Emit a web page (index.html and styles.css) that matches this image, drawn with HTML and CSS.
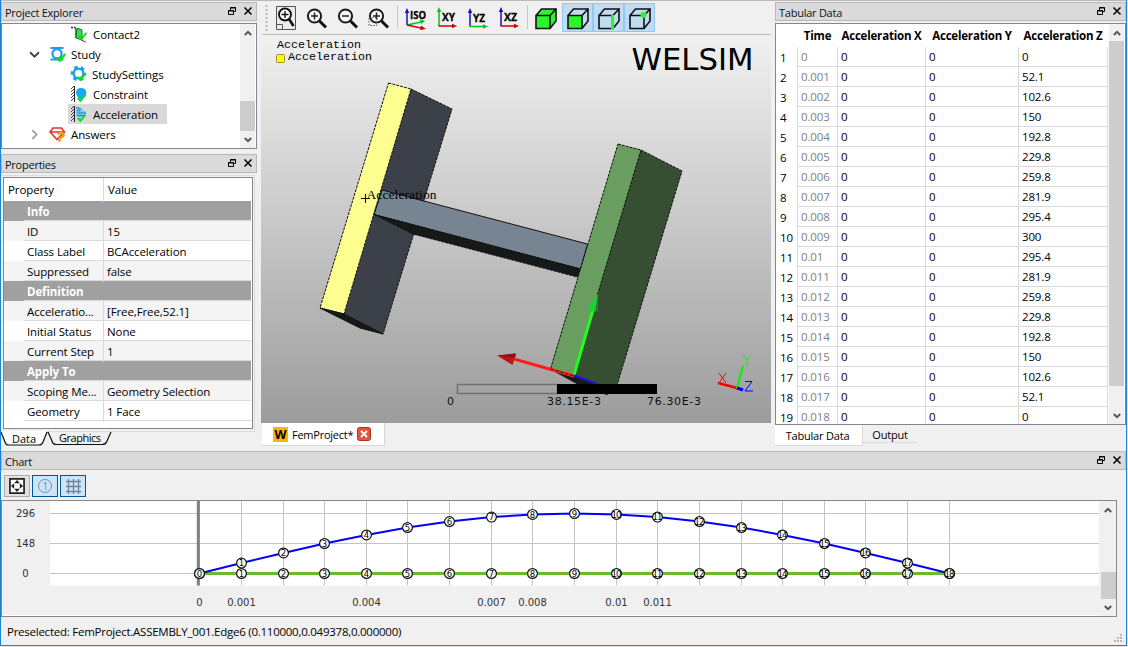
FILE: index.html
```html
<!DOCTYPE html>
<html lang="en">
<head>
<meta charset="utf-8">
<title>WELSIM</title>
<link rel="stylesheet" href="styles.css">
</head>
<body>
<svg class="defs" width="0" height="0">
  <defs>
    <symbol id="restore" viewBox="0 0 8 8"><path d="M2.5 3V.5h5v4H6M2 1h6" fill="none" stroke="#000"/><path d="M.5 3.5h5v4h-5zM0 4h6" fill="none" stroke="#000"/></symbol>
    <symbol id="close" viewBox="0 0 8 8"><path d="M.5.5l7 7M7.500.5l-7 7" stroke="#000" stroke-width="1.500"/></symbol>
    <symbol id="up" viewBox="0 0 8 6"><path d="M.8 5L4 1.800 7.200 5" fill="none" stroke="#555" stroke-width="1.900"/></symbol>
    <symbol id="down" viewBox="0 0 8 6"><path d="M.8 1L4 4.200 7.200 1" fill="none" stroke="#555" stroke-width="1.900"/></symbol>
    <symbol id="lens" viewBox="0 0 22 22"><circle cx="8.500" cy="8" r="6.600" fill="#f8f8f8" stroke="#1c1c1c" stroke-width="2"/><path d="M13.500 13l6.500 6.500" stroke="#111" stroke-width="3"/></symbol>
    <symbol id="check" viewBox="0 0 9 8"><path d="M.8 4l2.600 3L8.300.8" fill="none" stroke="#10e010" stroke-width="2"/></symbol>
    <symbol id="wall" viewBox="0 0 5 18"><path d="M4.500 1v16" stroke="#222"/><path d="M1 4l3-3M1 7l3-3M1 10l3-3M1 13l3-3M1 16l3-3" stroke="#333" stroke-width=".9"/></symbol>
  </defs>
</svg>
<div class="window">
  <div class="workspace">
    <aside class="left">
      <header class="dock-title"><span>Project Explorer</span><svg width="8" height="8"><use href="#restore"/></svg><svg width="8" height="8"><use href="#close"/></svg></header>
      <div class="tree">
        <ul class="tree-list">
          <li class="lvl2"><svg class="ic" viewBox="0 0 18 18"><path d="M1 2.500h4v2" fill="none" stroke="#222" stroke-width="1.300" stroke-dasharray="2 1"/><path d="M5 3l3 1v10l-3-1.500z" fill="#1c9c2a"/><path d="M7 3l5 2v10l-6-2z" fill="#35e048" stroke="#187a28"/><path d="M11 15l5 2" stroke="#444"/><use href="#check" x="8" y="7" width="9" height="8"/></svg><span>Contact2</span></li>
          <li class="lvl1"><svg class="chev" viewBox="0 0 10 10"><path d="M1 3l4 4 4-4" fill="none" stroke="#444" stroke-width="1.800"/></svg><svg class="ic" viewBox="0 0 18 18"><path d="M1.500 3h13M1.500 14.500h13" stroke="#189df0" stroke-width="2"/><circle cx="8" cy="8.700" r="4.600" fill="#fff" stroke="#189df0" stroke-width="2.200"/><use href="#check" x="7" y="8" width="10" height="9"/></svg><span>Study</span></li>
          <li class="lvl2 wide"><svg class="ic" viewBox="0 0 18 18"><circle cx="8.500" cy="8.500" r="6.300" fill="none" stroke="#189df0" stroke-width="3" stroke-dasharray="3.300 3.300" stroke-dashoffset="1.650"/><circle cx="8.500" cy="8.500" r="4.900" fill="#fff" stroke="#189df0" stroke-width="2.400"/><use href="#check" x="7" y="8" width="9" height="8"/></svg><span>StudySettings</span></li>
          <li class="lvl2"><svg class="ic" viewBox="0 0 18 18"><use href="#wall" width="5" height="18"/><path d="M6 8q0-5 5-5t5.500 5q-1 4-5 7-5-3-5.500-7z" fill="#16a8f5"/><use href="#check" x="7" y="9" width="9" height="8"/></svg><span>Constraint</span></li>
          <li class="lvl2 selected"><svg class="ic" viewBox="0 0 18 18"><use href="#wall" width="5" height="18"/><path d="M6 3q4-2 6 1t4 2v4l-5 5-5-4z" fill="#7cc8ee"/><path d="M6 3q5-1 4 2t-3 0M7 8h9M7 10.500h9" fill="none" stroke="#1583c5"/><use href="#check" x="7" y="9" width="9" height="8"/></svg><span>Acceleration</span></li>
          <li class="lvl1"><svg class="chev" viewBox="0 0 10 10"><path d="M3 1l4 4-4 4" fill="none" stroke="#999" stroke-width="1.500"/></svg><svg class="ic" viewBox="0 0 18 18"><path d="M4 3h8.500l3 4-7.500 7.500L1 7z M1 7h14.500" fill="#fff5f5" stroke="#d33a3a" stroke-width="1.600"/><path d="M9 9.500q3-3 5-1t-2 4l-1 1" fill="none" stroke="#f79a10" stroke-width="2.500"/><circle cx="10.500" cy="15.500" r="1.400" fill="#f79a10"/></svg><span>Answers</span></li>
        </ul>
        <div class="scroll tree-scroll"><svg width="8" height="6"><use href="#up"/></svg><i></i><svg width="8" height="6"><use href="#down"/></svg></div>
      </div>
      <header class="dock-title props-title"><span>Properties</span><svg width="8" height="8"><use href="#restore"/></svg><svg width="8" height="8"><use href="#close"/></svg></header>
      <div class="props-frame">
        <div class="props">
          <div class="prow head"><b>Property</b><span>Value</span></div>
          <div class="group">Info</div>
          <div class="prow odd"><b>ID</b><span>15</span></div>
          <div class="prow"><b>Class Label</b><span>BCAcceleration</span></div>
          <div class="prow odd"><b>Suppressed</b><span>false</span></div>
          <div class="group">Definition</div>
          <div class="prow odd"><b>Acceleratio...</b><span>[Free,Free,52.1]</span></div>
          <div class="prow"><b>Initial Status</b><span>None</span></div>
          <div class="prow odd"><b>Current Step</b><span>1</span></div>
          <div class="group">Apply To</div>
          <div class="prow odd"><b>Scoping Me...</b><span>Geometry Selection</span></div>
          <div class="prow"><b>Geometry</b><span>1 Face</span></div>
        </div>
      </div>
      <svg class="bottom-tabs" width="120" height="16" viewBox="0 0 120 16">
        <path d="M0 0l4 11q1 3 3 3h31q3 0 4-3l4-11" fill="#fff"/>
        <path d="M0 1l4 10q1 3 3 3h31q3 0 4-3l4-10M47 1l4 9q1 3.500 4 3.500h46q4 0 5-3.500l4-9" fill="none" stroke="#111" stroke-width="1.200"/>
        <text x="11" y="12" textLength="24">Data</text><text x="58" y="11" textLength="42">Graphics</text>
      </svg>
    </aside>

    <main class="center">
      <div class="toolbar">
        <svg class="grip" width="3" height="26"><path d="M1.500 0v26" stroke="#b5b5b5" stroke-width="2" stroke-dasharray="2 2"/></svg>
        <span class="tool"><svg width="22" height="26" viewBox="0 0 22 26"><path d="M.5 1.500h19v23H.5z" fill="#ececec" stroke="#55554f"/><path d="M.5 19.500h6v5" fill="none" stroke="#55554f"/><circle cx="9" cy="9.500" r="6" fill="#fff" stroke="#111" stroke-width="1.900"/><path d="M13 14l4.500 7" stroke="#111" stroke-width="2.600"/><path d="M5.500 9.500h7M9 6v7" stroke="#111" stroke-width="1.400"/></svg></span>
        <span class="tool lens"><svg width="22" height="22"><use href="#lens"/><path d="M5 8h7M8.500 4.500v7" stroke="#222" stroke-width="1.500"/></svg></span>
        <span class="tool lens"><svg width="22" height="22"><use href="#lens"/><path d="M5 8h7" stroke="#222" stroke-width="1.500"/></svg></span>
        <span class="tool lens"><svg width="22" height="22"><use href="#lens"/><path d="M5 8h7M8.500 4.500v7" stroke="#222" stroke-width="1.500"/><path d="M1 9.500h8v8H1z" fill="none" stroke="#555" stroke-dasharray="1.500 1.500"/></svg></span>
        <i class="sep"></i>
        <span class="tool axes"><svg width="24" height="24" viewBox="0 0 24 24"><path d="M4 18V5" stroke="#1010c8" stroke-width="1.500"/><path d="M1.800 6L4 1l2.200 5z" fill="#1010c8"/><path d="M4 18l14-3" stroke="#00c81a" stroke-width="1.500"/><path d="M17 12l5 2-4 3z" fill="#00c81a"/><path d="M4 18l14 3" stroke="#d00000" stroke-width="1.500"/><path d="M18 18.500l5 3.500-6 1z" fill="#d00000"/><text x="7" y="11.500" textLength="16" lengthAdjust="spacingAndGlyphs">ISO</text></svg></span>
        <span class="tool"><svg width="24" height="24" viewBox="0 0 24 24"><path d="M4 20V5" stroke="#00c81a" stroke-width="1.500"/><path d="M1.800 6L4 1l2.200 5z" fill="#00c81a"/><path d="M3.500 20H18" stroke="#d00000" stroke-width="1.500"/><path d="M17 17.700l5 2.300-5 2.300z" fill="#d00000"/><text x="7" y="15" textLength="13" lengthAdjust="spacingAndGlyphs">XY</text></svg></span>
        <span class="tool"><svg width="24" height="24" viewBox="0 0 24 24"><path d="M4 20V6" stroke="#1010c8" stroke-width="1.500"/><path d="M1.800 7L4 2l2.200 5z" fill="#1010c8"/><path d="M3.500 20.500H18" stroke="#00c81a" stroke-width="1.500"/><path d="M17 18.200l5 2.300-5 2.300z" fill="#00c81a"/><text x="7" y="15.500" textLength="12" lengthAdjust="spacingAndGlyphs">YZ</text></svg></span>
        <span class="tool"><svg width="24" height="24" viewBox="0 0 24 24"><path d="M4 20V5" stroke="#1010c8" stroke-width="1.500"/><path d="M1.800 6L4 1l2.200 5z" fill="#1010c8"/><path d="M3.500 20H18" stroke="#d00000" stroke-width="1.500"/><path d="M17 17.700l5 2.300-5 2.300z" fill="#d00000"/><text x="7" y="15" textLength="13" lengthAdjust="spacingAndGlyphs">XZ</text></svg></span>
        <i class="sep sep2"></i>
        <span class="tool cube"><svg width="22" height="22" viewBox="0 0 22 22"><path d="M1 7.500L6.500 1H21v12l-6 7.500H1z" fill="#2df52d"/><path d="M1 7.500h14v13H1zL6.500 1H21L15 7.500M21 1v12l-6 7.500" fill="none" stroke="#111" stroke-width="1.600"/></svg></span>
        <span class="tool on"><svg width="22" height="22" viewBox="0 0 22 22"><path d="M1 7.500h14v13H1z" fill="#2df52d"/><path d="M1 7.500h14v13H1zL6.500 1H21L15 7.500M21 1v12l-6 7.500" fill="none" stroke="#111" stroke-width="1.600"/></svg></span>
        <span class="tool on"><svg width="22" height="22" viewBox="0 0 22 22"><path d="M1 7.500h14v13H1zL6.500 1H21L15 7.500M21 1v12l-6 7.500" fill="none" stroke="#111" stroke-width="1.600"/><path d="M14.500 7v14" stroke="#2df52d" stroke-width="3"/></svg></span>
        <span class="tool on"><svg width="22" height="22" viewBox="0 0 22 22"><path d="M1 7.500h14v13H1zL6.500 1H21L15 7.500M21 1v12l-6 7.500" fill="none" stroke="#111" stroke-width="1.600"/><circle cx="14.500" cy="7" r="3" fill="#2df52d"/></svg></span>
      </div>
      <svg class="viewport" width="510" height="388" viewBox="261 35 510 388">
        <defs><linearGradient id="bg" x1="0" y1="0" x2="0" y2="1"><stop offset="0" stop-color="#f1f1f1"/><stop offset="1" stop-color="#9c9c9c"/></linearGradient></defs>
        <path d="M261 35h510v388H261z" fill="url(#bg)"/>
        <g class="mono"><text x="277" y="48" textLength="84">Acceleration</text><text x="288" y="60" textLength="84">Acceleration</text></g>
        <rect x="276.500" y="54.500" width="8" height="8" rx="1" fill="#ff0" stroke="#998e30"/>
        <text class="brand" x="631.500" y="70" textLength="122" lengthAdjust="spacingAndGlyphs">WELSIM</text>
        <g stroke="#111" stroke-width="1" stroke-linejoin="round">
          <path d="M411 89l41 20-69 225-40-20z" fill="#3c4149" stroke-dasharray="3 1"/>
          <path d="M388.500 83L411 89l-67 225-24-6z" fill="#ffff91" stroke-dasharray="3 1"/>
          <path d="M320 308l24 6 39 20-23-6z" fill="#151919"/>
          <path d="M382 190l205.500 54-7 25L374 214.500z" fill="#778492"/>
          <path d="M374 214.500L580.500 269l-3 8L413 234z" fill="#151919" stroke-dasharray="3 1"/>
          <path d="M641 150l41 21-65 214-10 10-35-20z" fill="#364e31" stroke-dasharray="3 1"/>
          <path d="M618 144l23 6-68 226-22.500-7z" fill="#699e60" stroke-dasharray="3 1"/>
          <path d="M550.500 369l22.500 6 39 16-6 2-21-5z" fill="#151919"/>
        </g>
        <path d="M574 375l19-65" stroke="#1eff1e" stroke-width="3"/><path d="M598 294l-11 15 5 2.500 6-.5z" fill="#20d038"/><path d="M598 294l-3 17 3-.5z" fill="#178a2a"/>
        <path d="M574 376l-60-17" stroke="#ff1c1c" stroke-width="3"/><path d="M497 355.500l19-2-3.500 11.500z" fill="#b51818"/><path d="M497 355.500l19-2-1 4z" fill="#8a1010"/>
        <path d="M574 375.500l24 9" stroke="#1515d8" stroke-width="2"/>
        <path d="M551 369l23 7" stroke="#4a0909" stroke-dasharray="3 2"/>
        <path d="M457.500 384.500h100v9h-100z" fill="none" stroke="#707070" stroke-width="1.500"/>
        <path d="M557 384h100v10H557z"/>
        <g class="scale-text"><text x="447" y="405">0</text><text x="547" y="405" textLength="54">38.15E-3</text><text x="647" y="405" textLength="54">76.30E-3</text></g>
        <path d="M365.500 194v9M361 198.500h9" stroke="#000"/>
        <text class="pin" x="366.500" y="199" textLength="70">Acceleration</text>
        <path d="M737 388l-19-5" stroke="#f00" stroke-width="2.500"/><path d="M737 388l6-22" stroke="#15ec15" stroke-width="2.500"/><path d="M737 388l6 2" stroke="#00f" stroke-width="3"/>
        <path d="M719 373l7 10M726 373l-7 10" stroke="#f00" fill="none"/><path d="M743.500 355l3.500 5.500 3.500-5.500M747 360.500v5.500" stroke="#15ec15" fill="none"/><path d="M745 381.500h7l-7 9.500h8" stroke="#00f" fill="none"/>
      </svg>
      <div class="doc-tab"><svg width="15" height="15" viewBox="0 0 15 15"><rect width="15" height="15" fill="#ffb400"/><text x="1.500" y="12" textLength="12" lengthAdjust="spacingAndGlyphs">W</text></svg><span>FemProject*</span><svg width="14" height="14" viewBox="0 0 14 14"><rect x=".5" y=".5" width="13" height="13" rx="2" fill="#e2553a" stroke="#ab3520"/><path d="M4 4l6 6M10 4l-6 6" stroke="#fff" stroke-width="1.800"/></svg></div>
    </main>

    <aside class="right">
      <header class="dock-title"><span>Tabular Data</span><svg width="8" height="8"><use href="#restore"/></svg><svg width="8" height="8"><use href="#close"/></svg></header>
      <div class="table-frame">
        <div class="data" id="data">
          <div class="drow dhead"><b></b><span>Time</span><span>Acceleration X</span><span>Acceleration Y</span><span>Acceleration Z</span></div>
        </div>
        <div class="scroll table-scroll"><svg width="8" height="6"><use href="#up"/></svg><i></i><svg width="8" height="6"><use href="#down"/></svg></div>
      </div>
      <nav class="tabs"><span class="active">Tabular Data</span><span>Output</span></nav>
    </aside>
  </div>

  <section class="chart-dock">
    <header class="dock-title"><span>Chart</span><svg width="8" height="8"><use href="#restore"/></svg><svg width="8" height="8"><use href="#close"/></svg></header>
    <div class="chart-tools">
      <span><svg width="16" height="16" viewBox="0 0 17 17"><path d="M1 1h15v15H1z" fill="#fff" stroke="#222" stroke-width="1.800"/><path d="M8.500 2l3 3.500h-6zM8.500 15l3-3.500h-6zM2 8.500l3.500-3v6zM15 8.500l-3.500-3v6z" fill="#222"/></svg></span>
      <span class="on"><svg width="16" height="16" viewBox="0 0 16 16"><circle cx="8" cy="8" r="6.500" fill="none" stroke="#7890a4"/><text x="5.500" y="11.500">1</text></svg></span>
      <span class="on"><svg width="17" height="17" viewBox="0 0 17 17"><path d="M3.500 1v15M8.500 1v15M13.500 1v15M1 3.500h15M1 8.500h15M1 13.500h15" stroke="#6f8394" stroke-width="1.300"/></svg></span>
    </div>
    <div class="chart-frame">
      <svg id="plot" width="1098" height="115" viewBox="2 501 1098 115">
        <path d="M50 501h1049v84.500H50z" fill="#fff"/>
        <path d="M2.500 501v114.500H1100" fill="none" stroke="#fff"/>
      </svg>
      <div class="scroll chart-scroll"><svg width="8" height="6"><use href="#up"/></svg><i></i><svg width="8" height="6"><use href="#down"/></svg></div>
    </div>
  </section>
  <footer class="status"><span>Preselected: FemProject.ASSEMBLY_001.Edge6 (0.110000,0.049378,0.000000)</span><svg width="9" height="9"><path d="M6 1h2M3 4h2M6 4h2M0 7h2M3 7h2M6 7h2" stroke="#b8b8b8" stroke-width="2"/></svg></footer>
</div>
<script src="app.js"></script>
</body>
</html>
```

FILE: styles.css
```css
* { box-sizing: border-box; }
body { margin: 0; width: 1128px; height: 647px; overflow: hidden; background: #e4e4e4; font: 11.5px/20px "Open Sans", "Noto Sans", sans-serif; letter-spacing: -.1px; color: #000; }
svg { display: block; flex: none; }
.defs { position: absolute; }
.window { width: 1127px; height: 646px; border: solid #1883d7; border-width: 0 1px 1px; background: #f0f0f0; display: flex; flex-direction: column; }
.workspace { height: 451px; border-top: 1px solid #b8b8b8; display: flex; padding-top: 1px; }
.left { width: 256px; }
.center { width: 510px; margin-left: 4px; }
.right { width: 351px; margin-left: 4px; }
.dock-title { height: 19px; border: 1px solid #b9b9b9; background: #dadada; display: flex; align-items: center; gap: 8px; padding: 1px 4px 0 3px; font-size: 11px; letter-spacing: -.25px; color: #101020; }
.dock-title span { flex: 1; line-height: 16px; padding-top: 2px; }
.dock-title svg { margin-top: -2px; }

.tree { height: 126px; margin-top: 2px; border: 1px solid #828790; background: #fff; display: flex; }
.tree-list { list-style: none; margin: 0; padding: 0; flex: 1; }
.tree-list li { height: 20px; display: flex; align-items: center; }
.tree-list .ic { width: 18px; height: 18px; }
.lvl2 { margin-left: 66px; padding-left: 2px; }
.lvl1 { padding-left: 27px; }
.chev { width: 11px; height: 11px; margin-right: 9px; }
.tree-list span { line-height: 19px; margin-left: 5px; }
.lvl1 span { margin-left: 4px; }
.lvl2.wide span { margin-left: 4px; }
.tree-list .selected { background: #d9d9d9; width: 99px; }
.scroll { background: #f0f0f0; display: flex; flex-direction: column; align-items: center; width: 15px; padding: 6px 0 5px; }
.scroll i { width: 15px; background: #cdcdcd; }
.tree-scroll { margin-right: 1px; }
.tree-scroll i { height: 30px; margin: 65px 0 6px; }
.table-scroll i { height: 345px; margin: 5px 0 auto; }
.chart-scroll i { height: 27px; margin: auto 0 6px; }

.props-title { margin-top: 5px; }
.props-frame { width: 254px; height: 257px; margin-top: 2px; border: solid #dcdcdc; border-width: 1px 1px 1px 0; padding: 1px 1px 1px 2px; }
.props { height: 252px; border: 1px solid #828790; background: #fff; padding-right: 1px; }
.prow { display: grid; grid-template-columns: 100px 1fr; height: 20px; line-height: 21px; background: linear-gradient(#d9d9d9, #d9d9d9) 20px 100% / 100% 1px no-repeat; }
.prow.odd { background-color: #f4f4f4; }
.prow b { font-weight: 400; padding-left: 23px; border-right: 1px solid #d9d9d9; white-space: nowrap; }
.prow span { padding-left: 3px; }
.prow.head { height: 23px; line-height: 24px; background: none; }
.prow.head b { padding-left: 4px; }
.prow.head span { padding-left: 4px; }
.group { height: 20px; padding-left: 23px; background: linear-gradient(#d9d9d9, #d9d9d9) 20px 100% / 100% 1px no-repeat #a0a0a0; color: #fff; font-weight: 700; line-height: 21px; }
.bottom-tabs { margin-top: -1px; }
.bottom-tabs text { font-size: 11px; }

.toolbar { height: 33px; margin-left: 1px; border-bottom: 1px solid #b9b9b9; display: flex; padding: 1px 0 0 1px; }
.grip { margin: 2px 3px 0 2px; }
.tool { width: 31px; height: 29px; display: flex; align-items: center; justify-content: center; }
.tool svg { margin-top: 1px; }
.tool.lens svg { margin: 2px 1px 0 0; }
.tool.axes svg { margin: 2px 1px 0 0; }
.tool.on { background: #bfdcf3; border: 1px solid #90c8f6; }
.tool.on svg, .tool.cube svg { margin-top: 2px; }
.tool.cube svg { margin-right: 2px; }
.tool text { font: bold 11px "Open Sans", sans-serif; letter-spacing: 0; stroke: #000; stroke-width: .3px; }
.sep { width: 1px; height: 24px; background: #c8c8c8; margin: 2px 2px; }
.sep2 { margin: 2px 3px; }
.mono { font: 11.67px "Liberation Mono", monospace; letter-spacing: 0; }
.brand { font: 30px "DejaVu Sans", sans-serif; letter-spacing: 0; }
.scale-text { font: 11px "DejaVu Sans", sans-serif; letter-spacing: 0; fill: #111; }
.pin { font: 13.5px "Liberation Serif", serif; letter-spacing: 0; }
.doc-tab { width: 123px; height: 23px; margin-left: 1px; background: #fff; border-right: 1px solid #d5d5d5; border-bottom: 1px solid #d5d5d5; display: flex; align-items: center; padding-left: 11px; font-size: 11px; letter-spacing: -.25px; }
.doc-tab span { width: 65px; padding-left: 4px; margin-right: 4px; padding-top: 1px; }
.doc-tab text { font: bold 12px "Open Sans", sans-serif; letter-spacing: 0; }

.table-frame { height: 402px; margin-top: 2px; border: 1px solid #828790; background: #fff; display: flex; justify-content: space-between; overflow: hidden; }
.data { height: 400px; overflow: hidden; }
.drow { height: 20px; display: grid; grid-template-columns: 22px 40px 88px 93px 89px; line-height: 19px; }
.drow b { font-weight: 400; padding: 1px 0 0 4px; border-right: 1px solid #d9d9d9; }
.drow span { border-right: 1px solid #d9d9d9; border-bottom: 1px solid #d9d9d9; padding-left: 3px; letter-spacing: -.15px; }
.drow span:nth-child(2) { color: #808080; }
.drow.dhead { height: 23px; line-height: 23px; }
.dhead span, .drow.dhead span:nth-child(2) { font-weight: 700; color: #000; border-color: transparent; padding: 0; text-align: center; white-space: nowrap; letter-spacing: -.2px; }
.drow.dhead b { border-color: transparent; }
.table-scroll { width: 15px; margin-right: 1px; }
.tabs { display: flex; line-height: 19px; font-size: 11px; letter-spacing: -.2px; }
.tabs span { border-bottom: 1px solid #d9d9d9; height: 18px; width: 54px; text-align: center; line-height: 19px; }
.tabs .active { width: 88px; height: 21px; background: #fff; border-right: 1px solid #d9d9d9; line-height: 21px; padding-right: 2px; }

.chart-dock { height: 166px; }
.chart-tools { height: 30px; display: flex; gap: 2px; padding: 5px 0 0 3px; }
.chart-tools span { width: 26px; height: 22px; border: 1px solid #adadad; background: #e1e1e1; display: flex; align-items: center; justify-content: center; }
.chart-tools .on { background: #cce4f7; border-color: #00559b; }
.chart-tools text { font-size: 10px; fill: #7890a4; }
.chart-frame { width: 1116px; height: 117px; border: 1px solid #828790; display: flex; }
.chart-scroll { width: 16px; }
.axis { font: 10px "DejaVu Sans", sans-serif; letter-spacing: 0; fill: #333; text-anchor: middle; }
.num { font: 8.5px "DejaVu Sans", sans-serif; letter-spacing: -.8px; text-anchor: middle; }
.status { height: 28px; display: flex; justify-content: space-between; padding: 4px 3px 0 6px; line-height: 21px; letter-spacing: -.25px; }
.status svg { margin-top: 13px; }
```

FILE: app.js
```js
const values = [0, 52.1, 102.6, 150, 192.8, 229.8, 259.8, 281.9, 295.4, 300, 295.4, 281.9, 259.8, 229.8, 192.8, 150, 102.6, 52.1, 0];

// Tabular data rows
document.getElementById('data').insertAdjacentHTML('beforeend', values.map((v, i) =>
  `<div class="drow"><b>${i + 1}</b><span>${i / 1000}</span><span>0</span><span>0</span><span>${v}</span></div>`).join(''));

// Chart
const px = i => Math.floor(199.82 + i * 41.63);
const py = v => 573.5 - v * 0.2;
let out = '';
for (const [v, y] of [[296, 513.5], [148, 543.5], [0, 573.5]]) {
  out += `<path d="M50 ${y}H1099" stroke="#c4c4c4"/><text class="axis" x="25.500" y="${y + 3.5}">${v}</text>`;
}
values.forEach((v, i) => {
  out += `<path d="M${px(i) + 0.5} 501V585.500" stroke="#c4c4c4"/>`;
});
out += '<path d="M198.300 501V585.500" stroke="#808080" stroke-width="3"/>';
out += '<path d="M199 573.500H949" stroke="#6cb52d" stroke-width="3"/><path d="M199 573.500H949" stroke="#20e810" stroke-width="1"/>';
out += `<polyline points="${values.map((v, i) => px(i) + 0.5 + ',' + py(v)).join(' ')}" fill="none" stroke="#00f" stroke-width="2"/>`;
const dot = (i, y) => `<circle cx="${px(i) + 0.5}" cy="${y}" r="4.900" fill="#fff" stroke="#111" stroke-width="1.200"/><text class="num" x="${px(i) + 0.1}" y="${y + 3.1}">${i}</text>`;
values.forEach((v, i) => { out += dot(i, 573.5) + dot(i, py(v)); });
for (const [i, t] of [[0, '0'], [1, '0.001'], [4, '0.004'], [7, '0.007'], [8, '0.008'], [10, '0.01'], [11, '0.011']]) {
  out += `<text class="axis" x="${px(i) + 0.5}" y="606">${t}</text>`;
}
document.getElementById('plot').insertAdjacentHTML('beforeend', out);
```
